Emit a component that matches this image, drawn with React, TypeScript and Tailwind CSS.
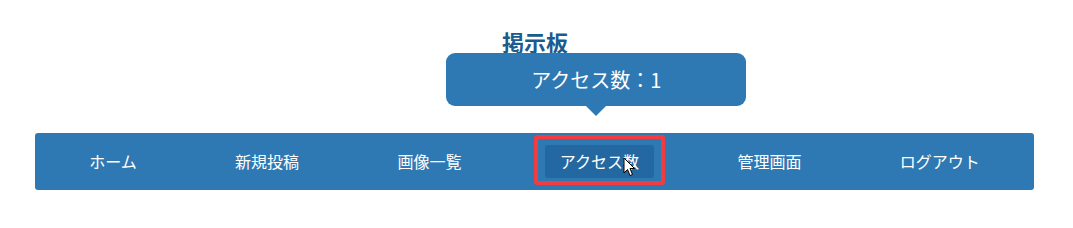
import { useState } from "react";

const NAV_ITEMS = ["ホーム", "新規投稿", "画像一覧", "アクセス数", "管理画面", "ログアウト"];

function Cursor() {
  return (
    <svg
      width="13"
      height="20"
      viewBox="0 0 13 20"
      className="pointer-events-none absolute left-[78px] top-[12px]"
    >
      <path
        d="M1 1 L1 16 L4.5 12.5 L7 18.5 L9.5 17.5 L7 11.5 L11.5 11.5 Z"
        fill="#ffffff"
        stroke="#000000"
        strokeWidth="1"
        strokeLinejoin="miter"
      />
    </svg>
  );
}

export default function App() {
  const [count] = useState(1);
  const active = "アクセス数";

  return (
    <div
      className="h-[228px] w-full bg-white"
      style={{ fontFamily: '"Noto Sans CJK JP", "Noto Sans", sans-serif' }}
    >
      <div className="flex flex-col items-center pt-[26px] pr-[3px]">
        <h1 className="text-[22px] font-bold leading-[30px] text-[#1b5b8d]">掲示板</h1>
      </div>

      <nav className="ml-[35px] mr-[39px] mt-[77px] flex h-[57px] items-center justify-around rounded-[3px] bg-[#2e79b3] px-[5px]">
        {NAV_ITEMS.map((label) =>
          label === active ? (
            <div key={label} className="relative">
              {/* tooltip */}
              <div className="absolute bottom-[62px] left-1/2 w-[300px] -translate-x-[153px]">
                <div className="flex h-[53px] items-center justify-center rounded-[9px] bg-[#2e79b3] text-[20px] text-white">
                  アクセス数：{count}
                </div>
                <div className="mx-auto h-0 w-0 border-x-[10px] border-t-[10px] border-x-transparent border-t-[#2e79b3]" />
              </div>
              {/* highlight frame */}
              <div className="pointer-events-none absolute -inset-x-[11px] -top-[10px] -bottom-[7px] rounded-[3px] border-[4px] border-[#f23d40]" />
              <a className="block rounded-[3px] bg-[#2468a1] px-[15px] text-[16px] leading-[33px] text-white">
                {label}
              </a>
              <Cursor />
            </div>
          ) : (
            <a key={label} className="block px-[15px] text-[16px] leading-[33px] text-white">
              {label}
            </a>
          )
        )}
      </nav>
    </div>
  );
}
